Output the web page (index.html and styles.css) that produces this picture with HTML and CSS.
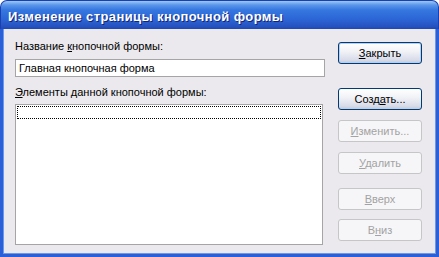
FILE: index.html
```html
<!DOCTYPE html>
<html lang="ru">
<head>
  <meta charset="UTF-8">
  <title>Изменение страницы кнопочной формы</title>
  <link rel="stylesheet" href="styles.css">
</head>
<body>

  <div class="window">
    <div class="titlebar">Изменение страницы кнопочной формы</div>
    <div class="client">
      <div class="left">
        <div class="label">Название <u>к</u>нопочной формы:</div>
        <div class="textbox">Главная кнопочная форма</div>
        <div class="label second"><u>Э</u>лементы данной кнопочной формы:</div>
        <div class="listbox"><div class="focusrow"></div></div>
      </div>
      <div class="buttons">
        <div class="btn default b-close"><u>З</u>акрыть</div>
        <div class="btn b-create">Созд<u>а</u>ть...</div>
        <div class="btn off b-edit"><u>И</u>зменить...</div>
        <div class="btn off b-del"><u>У</u>далить</div>
        <div class="btn off b-up"><u>В</u>верх</div>
        <div class="btn off b-down">В<u>н</u>из</div>
      </div>
    </div>
  </div>

</body>
</html>
```

FILE: styles.css
```css
body { margin: 0; font-family: "Liberation Sans", Arial, sans-serif; font-size: 11px; color: #000; }
u { text-decoration: underline; text-underline-offset: 1px; }

.window { width: 439px; height: 257px; display: flex; flex-direction: column; }

.titlebar {
  height: 29px; box-sizing: border-box; padding: 3px 0 0 7px; line-height: 26px;
  border-radius: 7px 7px 0 0; border: 1px solid #1c3fb0; border-bottom: none;
  background: linear-gradient(#9cc8f4 0px, #5a96ea 4px, #3577e0 9px, #2c66d6 18px, #2654c2 25px, #1f48b5 28px);
  color: #fff; font-size: 13px; font-weight: bold; letter-spacing: 0.4px; text-shadow: 1px 1px 0 #10257a;
}

.client {
  flex: 1; display: flex; background: #ebe9ed;
  border: 3px solid #2a5fd8; border-top: none;
  box-shadow: inset 1px 0 0 #6a98ec, inset -1px 0 0 #6a98ec, inset 0 -1px 0 #6a98ec;
  padding: 11px 0 0 12px;
}

.left { width: 310px; }
.label { line-height: 13px; height: 13px; }
.label.second { margin-top: 9px; }

.textbox {
  margin-top: 6px; height: 18px; box-sizing: border-box; border: 1px solid #a5a5a5;
  background: #fff; padding: 0 3px; line-height: 16px;
}

.listbox {
  margin-top: 5px; width: 308px; height: 141px; box-sizing: border-box;
  border: 1px solid #a5a5a5; background: #fff; padding: 1px;
}
.focusrow { height: 13px; box-sizing: border-box; border: 1px dotted #000; }

.buttons { margin-left: 13px; width: 84px; display: flex; flex-direction: column; }
.btn {
  height: 22px; box-sizing: border-box; text-align: center; line-height: 20px;
  border: 1px solid #003c74; border-radius: 3px;
  background: linear-gradient(#ffffff, #f2f3f7 40%, #d8dce9 85%, #c3c9db);
}
.btn.default { box-shadow: inset 0 0 0 1px #b9cdf1; }
.btn.off { border-color: #c6c6c8; background: #f6f6f8; color: #a3a3a3; }

.b-close { margin-top: 2px; }
.b-create { margin-top: 24px; }
.b-edit { margin-top: 10px; }
.b-del { margin-top: 10px; }
.b-up { margin-top: 14px; }
.b-down { margin-top: 9px; }
```
